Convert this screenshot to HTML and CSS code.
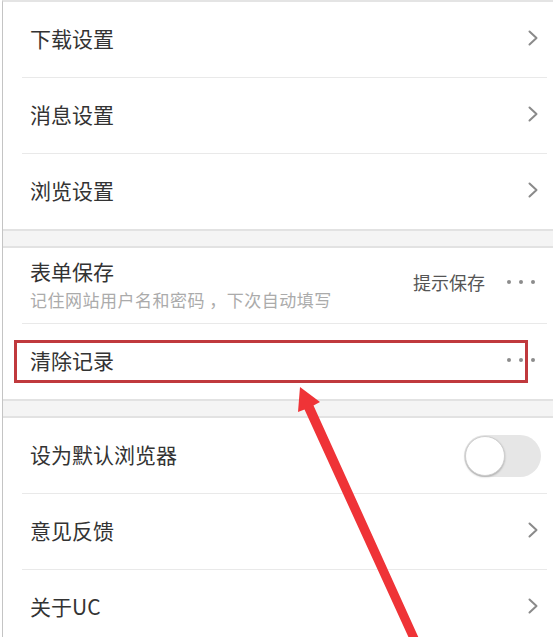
FILE: index.html
```html
<!DOCTYPE html>
<html lang="zh-CN">
<head>
<meta charset="utf-8">
<title>设置</title>
<link rel="stylesheet" href="styles.css">
</head>
<body>
<div class="page">
  <section class="group">
    <div class="row"><span class="title">下载设置</span><svg class="chev" viewBox="0 0 10 16"><polyline points="1.5,1.5 8.5,8 1.5,14.5"/></svg></div>
    <div class="row"><span class="title">消息设置</span><svg class="chev" viewBox="0 0 10 16"><polyline points="1.5,1.5 8.5,8 1.5,14.5"/></svg></div>
    <div class="row"><span class="title">浏览设置</span><svg class="chev" viewBox="0 0 10 16"><polyline points="1.5,1.5 8.5,8 1.5,14.5"/></svg></div>
  </section>
  <div class="gap"></div>
  <section class="group">
    <div class="row">
      <div class="stack">
        <span class="title">表单保存</span>
        <span class="sub">记住网站用户名和密码 ，下次自动填写</span>
      </div>
      <div class="right">
        <span class="value">提示保存</span>
        <span class="dots"><i></i><i></i><i></i></span>
      </div>
    </div>
    <div class="row">
      <span class="title">清除记录</span>
      <span class="dots"><i></i><i></i><i></i></span>
    </div>
  </section>
  <div class="gap"></div>
  <section class="group">
    <div class="row toggle-row"><span class="title">设为默认浏览器</span><span class="toggle"><span class="knob"></span></span></div>
    <div class="row"><span class="title">意见反馈</span><svg class="chev" viewBox="0 0 10 16"><polyline points="1.5,1.5 8.5,8 1.5,14.5"/></svg></div>
    <div class="row"><span class="title">关于UC</span><svg class="chev" viewBox="0 0 10 16"><polyline points="1.5,1.5 8.5,8 1.5,14.5"/></svg></div>
  </section>
</div>
<div class="highlight"></div>
<svg class="arrow" viewBox="0 0 553 637" width="553" height="637">
  <polygon points="300,387 320,402 313.5,405.5 421,643 413,647 304.5,409.5 298,412"/>
</svg>
</body>
</html>
```

FILE: styles.css
```css
html, body {
  margin: 0;
  padding: 0;
  background: #ffffff;
}
body {
  position: relative;
  width: 553px;
  height: 637px;
  overflow: hidden;
  font-family: "Noto Sans CJK SC", "Noto Sans", sans-serif;
  color: #333333;
}
.page {
  margin-left: 2px;
  border-left: 1px solid #c4c4c4;
  border-top: 2px solid #e4e4e4;
}
.group {
  display: flex;
  flex-direction: column;
}
.row {
  height: 72px;
  margin: 0 6px 0 19px;
  padding: 0 9px 3px 8px;
  display: flex;
  align-items: center;
  justify-content: space-between;
  border-bottom: 1px solid #e9e9e9;
}
.row:last-child {
  border-bottom: none;
}
.title {
  font-size: 21px;
  line-height: 28px;
  color: #333333;
}
.stack {
  display: flex;
  flex-direction: column;
  gap: 3px;
}
.sub {
  font-size: 17px;
  line-height: 24px;
  color: #ababab;
  letter-spacing: 0.5px;
}
.right {
  display: flex;
  align-items: center;
  gap: 22px;
  margin-top: -4px;
}
.value {
  font-size: 18px;
  line-height: 24px;
  color: #555555;
}
.dots {
  display: flex;
  gap: 8px;
  margin-right: 3px;
}
.dots i {
  display: block;
  width: 4px;
  height: 4px;
  border-radius: 50%;
  background: #8c8c8c;
}
.chev {
  width: 10px;
  height: 16px;
  fill: none;
  stroke: #8a8a8a;
  stroke-width: 2;
  stroke-linecap: round;
  stroke-linejoin: round;
}
.gap {
  height: 15px;
  background: #f4f4f4;
  border-top: 2px solid #e2e2e2;
  border-bottom: 2px solid #e2e2e2;
}
.toggle-row {
  padding-right: 6px;
}
.toggle {
  width: 77px;
  height: 42px;
  border-radius: 21px;
  background: #e6e6e6;
  display: flex;
  align-items: center;
  margin-top: 3px;
}
.knob {
  width: 40px;
  height: 40px;
  margin-left: 1px;
  border-radius: 50%;
  background: #ffffff;
  box-sizing: border-box;
  border: 1px solid #cfcfcf;
  box-shadow: 0 1px 2px rgba(0, 0, 0, 0.25);
}
.highlight {
  position: absolute;
  left: 14px;
  top: 340px;
  width: 514px;
  height: 43px;
  box-sizing: border-box;
  border: 3px solid #c0393d;
}
.arrow {
  position: absolute;
  left: 0;
  top: 0;
  pointer-events: none;
}
.arrow polygon {
  fill: #ef3337;
}
```
